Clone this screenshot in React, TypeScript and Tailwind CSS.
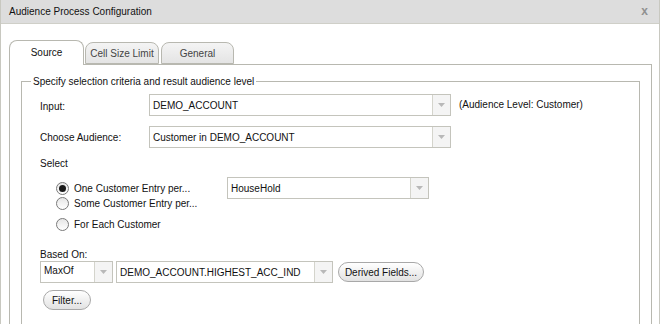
import React from 'react';

const font = { fontFamily: '"Liberation Sans", Arial, sans-serif' };

const Arrow: React.FC = () => (
  <div className="w-[18px] self-stretch border-l border-[#d4d4cc] bg-[#f4f4f4] flex items-center justify-center">
    <svg width="7" height="4" viewBox="0 0 7 4">
      <path d="M0 0 L7 0 L3.5 4 Z" fill="#b8b8b8" />
    </svg>
  </div>
);

interface SelectProps {
  value: string;
  width: string;
  height?: string;
  top?: boolean;
}

const Select: React.FC<SelectProps> = ({ value, width, height = 'h-[22px]', top }) => (
  <div className={`${width} ${height} flex border border-[#c4c4bc] bg-white`}>
    <div className={`flex-1 px-[3px] text-[10px] leading-[13px] text-[#111] flex ${top ? 'items-start pt-[2px]' : 'items-center'}`}>
      {value}
    </div>
    <Arrow />
  </div>
);

const Radio: React.FC<{ checked?: boolean; label: string; className?: string }> = ({ checked, label, className }) => (
  <div className={`flex items-center h-[13px] ${className ?? ''}`}>
    <div className="w-[13px] h-[13px] rounded-full border border-[#7a7a7a] bg-gradient-to-b from-[#e6e6e6] to-white flex items-center justify-center">
      {checked && <div className="w-[7px] h-[7px] rounded-full bg-[#1a1a1a]" />}
    </div>
    <span className="ml-[5px] text-[10px] leading-[13px] text-[#111]">{label}</span>
  </div>
);

const PillButton: React.FC<{ label: string; className?: string }> = ({ label, className }) => (
  <button
    className={`h-[20px] rounded-full border border-[#a8a8a8] bg-gradient-to-b from-white to-[#e2e2e2] text-[10px] leading-[13px] text-[#111] flex items-center justify-center ${className ?? ''}`}
  >
    {label}
  </button>
);

export default function App() {
  return (
    <div className="w-[660px] h-[324px] overflow-hidden bg-white border-l border-r border-[#c8c8c0] text-[10px] leading-[13px]" style={font}>
      {/* title bar */}
      <div className="h-[24px] bg-[#dddddd] border-b border-[#cfcfc8] flex items-center justify-between pl-[8px] pr-[11px]">
        <span className="text-[10px] text-[#111]">Audience Process Configuration</span>
        <span className="text-[12px] font-bold text-[#909090]">x</span>
      </div>

      <div className="pl-[8px] pr-[7px]">
        {/* tabs */}
        <div className="flex items-end mt-[15px] h-[25px] relative z-10">
          <div className="w-[75px] h-[25px] rounded-t-[8px] border border-b-0 border-[#b8b8b0] bg-white flex items-center justify-center text-[#111] -mb-px pb-[2px]">
            Source
          </div>
          <div className="ml-px w-[74px] h-[22px] rounded-t-[8px] border border-[#b8b8b0] bg-gradient-to-b from-[#f4f4f4] to-[#e4e4e4] flex items-center justify-center text-[#444]">
            Cell Size Limit
          </div>
          <div className="ml-[2px] w-[73px] h-[22px] rounded-t-[8px] border border-[#b8b8b0] bg-gradient-to-b from-[#f4f4f4] to-[#e4e4e4] flex items-center justify-center text-[#444]">
            General
          </div>
        </div>

        {/* panel */}
        <div className="border border-[#b8b8b0] h-[300px] pt-[10px] px-[11px]">
          <fieldset className="border border-[#b8b8b0] h-[300px]">
            <legend className="ml-[9px] px-[2px] text-[#111]">Specify selection criteria and result audience level</legend>

            <div className="pl-[18px]">
              <div className="flex items-center mt-[6px]">
                <span className="w-[109px] text-[#111] pt-[3px]">Input:</span>
                <Select value="DEMO_ACCOUNT" width="w-[302px]" />
                <span className="ml-[8px] text-[#111] -mt-[2px]">(Audience Level: Customer)</span>
              </div>

              <div className="flex items-center mt-[10px]">
                <span className="w-[109px] text-[#111] pt-[1px]">Choose Audience:</span>
                <Select value="Customer in DEMO_ACCOUNT" width="w-[302px]" />
              </div>

              <div className="mt-[9px] text-[#111]">Select</div>

              <div className="flex items-center mt-[7px]">
                <Radio checked label="One Customer Entry per..." className="ml-[16px] w-[171px]" />
                <Select value="HouseHold" width="w-[202px]" height="h-[22px]" />
              </div>
              <Radio label="Some Customer Entry per..." className="ml-[16px] -mt-[2px]" />
              <Radio label="For Each Customer" className="ml-[16px] mt-[8px]" />

              <div className="mt-[17px] text-[#111]">Based On:</div>
              <div className="flex items-center">
                <Select value="MaxOf" width="w-[73px]" top />
                <div className="ml-[3px]">
                  <Select value="DEMO_ACCOUNT.HIGHEST_ACC_IND" width="w-[217px]" />
                </div>
                <PillButton label="Derived Fields..." className="ml-[5px] w-[86px]" />
              </div>
              <PillButton label="Filter..." className="ml-[3px] mt-[7px] w-[48px]" />
            </div>
          </fieldset>
        </div>
      </div>
    </div>
  );
}
